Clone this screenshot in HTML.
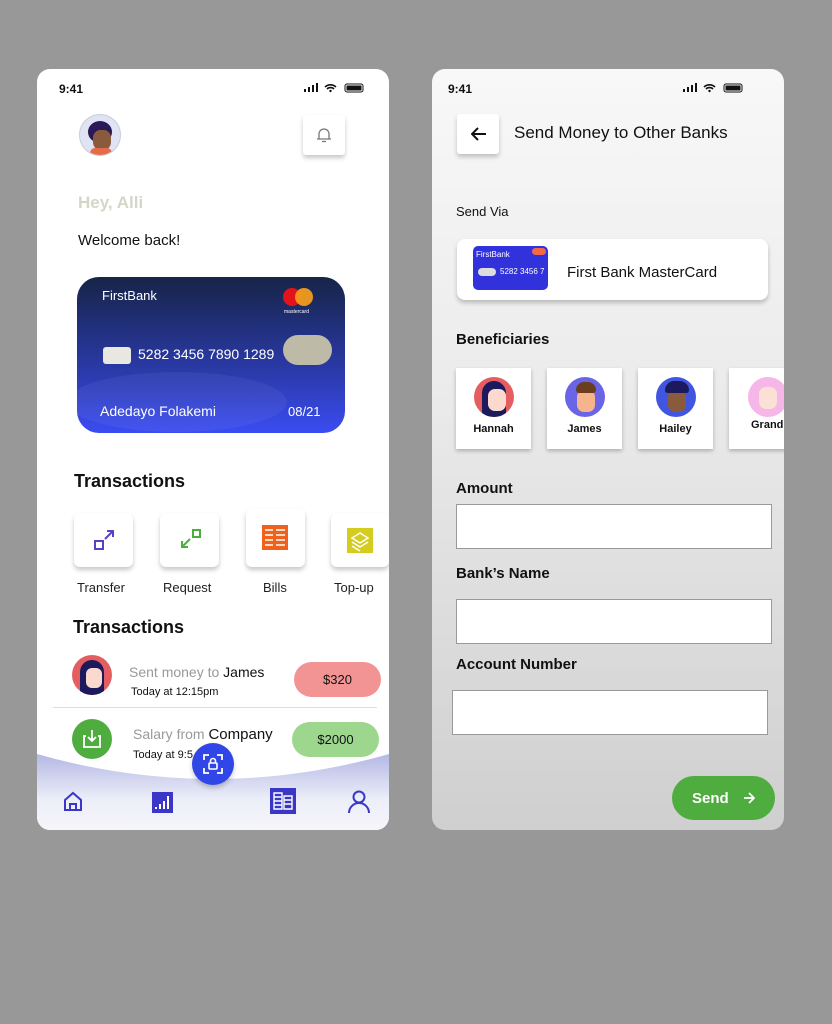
<!DOCTYPE html>
<html><head><meta charset="utf-8"><style>
*{margin:0;padding:0;box-sizing:border-box}
body{width:832px;height:1024px;background:#989898;font-family:"Liberation Sans",sans-serif;position:relative;overflow:hidden;color:#111}
.a{position:absolute}
.ph{position:absolute;top:69px;width:352px;height:761px;border-radius:13px;overflow:hidden}
.sb{font-size:12px;font-weight:bold}
.box{background:#fff;border-radius:6px;box-shadow:0 3px 5px rgba(0,0,0,.22)}
.lbl{font-size:13px;color:#222}
.h{font-weight:bold;font-size:18px}
.inp{position:absolute;background:#fff;border:1px solid #999}
.ben{position:absolute;top:299px;width:75px;height:81px;background:#fff;box-shadow:0 2px 4px rgba(0,0,0,.25);text-align:center;font-size:11px;font-weight:bold}
.ben .c{width:40px;height:40px;border-radius:50%;margin:9px auto 6px;position:relative;overflow:hidden}
.ben .f{position:absolute;left:12px;top:12px;width:18px;height:22px;border-radius:7px}
</style></head><body>

<!-- LEFT PHONE -->
<div class="ph" style="left:37px;background:#fff">
 <div class="a sb" style="left:22px;top:13px">9:41</div>
 <svg class="a" style="left:266px;top:13px" width="64" height="12"><rect x="1" y="7" width="2" height="3" fill="#111"/><rect x="5" y="5" width="2" height="5" fill="#111"/><rect x="9" y="3" width="2" height="7" fill="#111"/><rect x="13" y="1" width="2" height="9" fill="#111"/><path d="M22 5a8 8 0 0 1 11 0M24 7a5 5 0 0 1 7 0" stroke="#111" stroke-width="1.6" fill="none"/><circle cx="27.5" cy="9" r="1.2" fill="#111"/><rect x="42" y="2" width="18" height="8" rx="2" fill="none" stroke="#111"/><rect x="43.5" y="3.5" width="15" height="5" fill="#111"/></svg>
 <div class="a" style="left:42px;top:45px;width:42px;height:42px;border-radius:50%;background:#dfe3f3;border:1px solid #c8cbd8;overflow:hidden">
  <div class="a" style="left:8px;top:6px;width:24px;height:22px;border-radius:50%;background:#2a1957"></div>
  <div class="a" style="left:13px;top:15px;width:18px;height:20px;border-radius:40%;background:#8a5a3c"></div>
  <div class="a" style="left:10px;top:33px;width:22px;height:10px;background:#e76a4a;border-radius:6px"></div>
 </div>
 <div class="a box" style="left:266px;top:46px;width:42px;height:40px;border-radius:3px">
  <svg class="a" style="left:13px;top:11px" width="16" height="18"><path d="M3 13V8a5 5 0 0 1 10 0v5zM1 13h14M6 15.5h4" stroke="#777" stroke-width="1.3" fill="none"/></svg>
 </div>
 <div class="a" style="left:41px;top:124px;font-size:17px;font-weight:bold;color:#d5d5c8">Hey, Alli</div>
 <div class="a" style="left:41px;top:163px;font-size:15px">Welcome back!</div>
 <div class="a" style="left:40px;top:208px;width:268px;height:156px;border-radius:22px;background:linear-gradient(#172448,#2a3aa8 60%,#3a4cf2);overflow:hidden;color:#fff">
  <div class="a" style="left:-10px;top:95px;width:220px;height:60px;border-radius:50%;background:rgba(255,255,255,.05)"></div>
  <div class="a" style="left:25px;top:11px;font-size:13px">FirstBank</div>
  <div class="a" style="left:206px;top:11px;width:18px;height:18px;border-radius:50%;background:#e2141b"></div>
  <div class="a" style="left:218px;top:11px;width:18px;height:18px;border-radius:50%;background:#f79e1b;opacity:.92"></div>
  <div class="a" style="left:207px;top:32px;font-size:5px">mastercard</div>
  <div class="a" style="left:26px;top:70px;width:28px;height:17px;border-radius:3px;background:#e8e8e0"></div>
  <div class="a" style="left:61px;top:69px;font-size:14px">5282 3456 7890 1289</div>
  <div class="a" style="left:206px;top:58px;width:49px;height:30px;border-radius:15px;background:#bdbaa8"></div>
  <div class="a" style="left:23px;top:126px;font-size:14px">Adedayo Folakemi</div>
  <div class="a" style="left:211px;top:127px;font-size:13px">08/21</div>
 </div>
 <div class="a h" style="left:37px;top:402px">Transactions</div>
 <div class="a box" style="left:37px;top:444px;width:59px;height:54px"><svg class="a" style="left:19px;top:16px" width="24" height="24"><rect x="2" y="12" width="8" height="8" fill="none" stroke="#5b3fc4" stroke-width="2"/><path d="M12 10l8-8M14 2h6v6" stroke="#5b3fc4" stroke-width="2" fill="none"/></svg></div>
 <div class="a box" style="left:123px;top:444px;width:59px;height:54px"><svg class="a" style="left:19px;top:15px" width="24" height="24"><rect x="14" y="2" width="7" height="7" fill="none" stroke="#4cae3c" stroke-width="2"/><path d="M11 11l-8 8M3 13v6h6" stroke="#4cae3c" stroke-width="2" fill="none"/></svg></div>
 <div class="a box" style="left:209px;top:440px;width:59px;height:58px"><div class="a" style="left:16px;top:16px;width:26px;height:25px;background:#f0621c"></div><svg class="a" style="left:16px;top:16px" width="26" height="25"><path d="M3 5h8M14 5h9M3 10h8M14 10h9M3 15h8M14 15h9M3 20h8M14 20h9" stroke="#fff" stroke-width="1.6"/></svg></div>
 <div class="a box" style="left:294px;top:444px;width:58px;height:54px"><div class="a" style="left:16px;top:15px;width:26px;height:25px;background:#d4cc1e"></div><svg class="a" style="left:16px;top:15px" width="26" height="25"><path d="M5 10l8-5 8 5-8 5zM5 14l8 5 8-5M5 18l8 5" stroke="#fff" stroke-width="1.5" fill="none"/></svg></div>
 <div class="a lbl" style="left:40px;top:511px">Transfer</div>
 <div class="a lbl" style="left:126px;top:511px">Request</div>
 <div class="a lbl" style="left:226px;top:511px">Bills</div>
 <div class="a lbl" style="left:297px;top:511px">Top-up</div>
 <div class="a h" style="left:36px;top:548px">Transactions</div>
 <div class="a" style="left:35px;top:586px;width:40px;height:40px;border-radius:50%;background:#e45e61;overflow:hidden"><div class="a" style="left:8px;top:5px;width:24px;height:35px;border-radius:12px 12px 2px 2px;background:#1c1a5c"></div><div class="a" style="left:14px;top:13px;width:16px;height:20px;border-radius:6px;background:#fbd9cf"></div></div>
 <div class="a" style="left:92px;top:595px;font-size:14px;color:#999">Sent money to <span style="color:#111">James</span></div>
 <div class="a" style="left:94px;top:617px;font-size:11px">Today at 12:15pm</div>
 <div class="a" style="left:257px;top:593px;width:87px;height:35px;border-radius:18px;background:#f39494;font-size:13px;text-align:center;line-height:35px">$320</div>
 <div class="a" style="left:16px;top:638px;width:324px;height:1px;background:#ddd"></div>
 <div class="a" style="left:35px;top:650px;width:40px;height:40px;border-radius:50%;background:#4fac3f"><svg class="a" style="left:10px;top:9px" width="20" height="22"><path d="M4 8H2v11h16V8h-2M10 2v11M6 9l4 4 4-4" stroke="#fff" stroke-width="1.8" fill="none"/></svg></div>
 <div class="a" style="left:96px;top:657px;font-size:14px;color:#999">Salary from <span style="color:#111;font-size:15px">Company</span></div>
 <div class="a" style="left:96px;top:680px;font-size:11px">Today at 9:5</div>
 <div class="a" style="left:255px;top:653px;width:87px;height:35px;border-radius:18px;background:#9dd78e;font-size:13px;text-align:center;line-height:35px">$2000</div>
 <svg class="a" style="left:0;top:685px" width="352" height="76"><defs><linearGradient id="g" x1="0" y1="0" x2="0" y2="1"><stop offset="0" stop-color="#b4b8e4"/><stop offset=".6" stop-color="#eceef8"/><stop offset="1" stop-color="#f6f6fa"/></linearGradient></defs><path d="M0 0Q176 50 352 0V76H0z" fill="url(#g)"/></svg>
 <div class="a" style="left:155px;top:674px;width:42px;height:42px;border-radius:50%;background:#3146e6;box-shadow:0 3px 5px rgba(0,0,0,.2)"><svg class="a" style="left:11px;top:11px" width="20" height="20"><path d="M1 6V1h5M14 1h5v5M19 14v5h-5M6 19H1v-5" stroke="#fff" stroke-width="1.8" fill="none"/><rect x="6" y="9" width="8" height="6" rx="1" stroke="#fff" stroke-width="1.6" fill="none"/><path d="M7.5 9V7a2.5 2.5 0 0 1 5 0v2" stroke="#fff" stroke-width="1.6" fill="none"/></svg></div>
 <svg class="a" style="left:26px;top:722px" width="20" height="21"><path d="M2 9l8-7 8 7v10H2zM7 19v-6h6v6" stroke="#3a37c8" stroke-width="2" fill="none"/></svg>
 <svg class="a" style="left:115px;top:723px" width="21" height="21"><rect width="21" height="21" fill="#3a37c8"/><path d="M4 17v-2M8 17v-5M12 17v-8M16 17V4" stroke="#fff" stroke-width="2"/></svg>
 <svg class="a" style="left:233px;top:719px" width="26" height="26"><rect width="26" height="26" fill="#3a37c8"/><path d="M4 5h8v16H4zM14 8h8v13h-8zM4 9h8M4 13h8M4 17h8M14 12h8M14 16h8" stroke="#fff" stroke-width="1.4" fill="none"/></svg>
 <svg class="a" style="left:310px;top:721px" width="24" height="24"><circle cx="12" cy="7" r="5.5" stroke="#3a37c8" stroke-width="2" fill="none"/><path d="M2 23a10 10 0 0 1 20 0" stroke="#3a37c8" stroke-width="2" fill="none"/></svg>
</div>

<!-- RIGHT PHONE -->
<div class="ph" style="left:432px;background:linear-gradient(#f8f8f8,#ececec 40%,#cfcfcf)">
 <div class="a sb" style="left:16px;top:13px">9:41</div>
 <svg class="a" style="left:250px;top:13px" width="64" height="12"><rect x="1" y="7" width="2" height="3" fill="#111"/><rect x="5" y="5" width="2" height="5" fill="#111"/><rect x="9" y="3" width="2" height="7" fill="#111"/><rect x="13" y="1" width="2" height="9" fill="#111"/><path d="M22 5a8 8 0 0 1 11 0M24 7a5 5 0 0 1 7 0" stroke="#111" stroke-width="1.6" fill="none"/><circle cx="27.5" cy="9" r="1.2" fill="#111"/><rect x="42" y="2" width="18" height="8" rx="2" fill="none" stroke="#111"/><rect x="43.5" y="3.5" width="15" height="5" fill="#111"/></svg>
 <div class="a box" style="left:25px;top:45px;width:42px;height:40px;border-radius:3px"><svg class="a" style="left:14px;top:13px" width="16" height="14"><path d="M15 7H2M7 1L1 7l6 6" stroke="#111" stroke-width="2" fill="none"/></svg></div>
 <div class="a" style="left:82px;top:54px;font-size:17px">Send Money to Other Banks</div>
 <div class="a" style="left:24px;top:135px;font-size:13px">Send Via</div>
 <div class="a box" style="left:25px;top:170px;width:311px;height:61px;border-radius:8px">
  <div class="a" style="left:16px;top:7px;width:75px;height:44px;border-radius:5px;background:#3232dc;color:#fff"><div class="a" style="left:3px;top:4px;font-size:8px">FirstBank</div><div class="a" style="left:59px;top:2px;width:14px;height:7px;border-radius:4px;background:#f06a4a"></div><div class="a" style="left:5px;top:22px;width:18px;height:8px;border-radius:4px;background:#ddd"></div><div class="a" style="left:27px;top:21px;font-size:8px;white-space:nowrap">5282 3456 7</div></div>
  <div class="a" style="left:110px;top:25px;font-size:15px">First Bank MasterCard</div>
 </div>
 <div class="a" style="left:24px;top:262px;font-size:15px;font-weight:bold">Beneficiaries</div>
 <div class="ben" style="left:24px"><div class="c" style="background:#e45e61"><div class="a" style="left:8px;top:4px;width:24px;height:36px;border-radius:12px 12px 2px 2px;background:#1c1a5c"></div><div class="f" style="left:14px;background:#fbd9cf"></div></div>Hannah</div>
 <div class="ben" style="left:115px"><div class="c" style="background:#6a64e6"><div class="f" style="background:#f6b48c;top:13px"></div><div class="a" style="left:11px;top:5px;width:20px;height:11px;border-radius:8px 8px 3px 3px;background:#6b3e1e"></div></div>James</div>
 <div class="ben" style="left:206px"><div class="c" style="background:#4055e0"><div class="f" style="background:#8a5a3c;top:13px"></div><div class="a" style="left:9px;top:4px;width:24px;height:12px;border-radius:10px 10px 3px 3px;background:#1c1a5c"></div></div><div style="margin-top:2px">Hailey</div></div>
 <div class="ben" style="left:297px;text-align:left;padding-left:22px"><div class="c" style="background:#f7b6e8;margin-left:-3px"><div class="f" style="background:#fbe0d6;top:10px;left:11px"></div></div><span style="position:relative;top:-4px">Grand</span></div>
 <div class="a" style="left:24px;top:411px;font-size:15px;font-weight:bold">Amount</div>
 <div class="inp" style="left:24px;top:435px;width:316px;height:45px"></div>
 <div class="a" style="left:24px;top:496px;font-size:15px;font-weight:bold">Bank’s Name</div>
 <div class="inp" style="left:24px;top:530px;width:316px;height:45px"></div>
 <div class="a" style="left:24px;top:587px;font-size:15px;font-weight:bold">Account Number</div>
 <div class="inp" style="left:20px;top:621px;width:316px;height:45px"></div>
 <div class="a" style="left:240px;top:707px;width:103px;height:44px;border-radius:22px;background:#4fac3f;color:#fff;font-size:15px;font-weight:bold;display:flex;align-items:center;padding-left:20px">Send<svg style="margin-left:14px" width="12" height="12"><path d="M1 6h10M6 1l5 5-5 5" stroke="#fff" stroke-width="1.8" fill="none"/></svg></div>
</div>
</body></html>
